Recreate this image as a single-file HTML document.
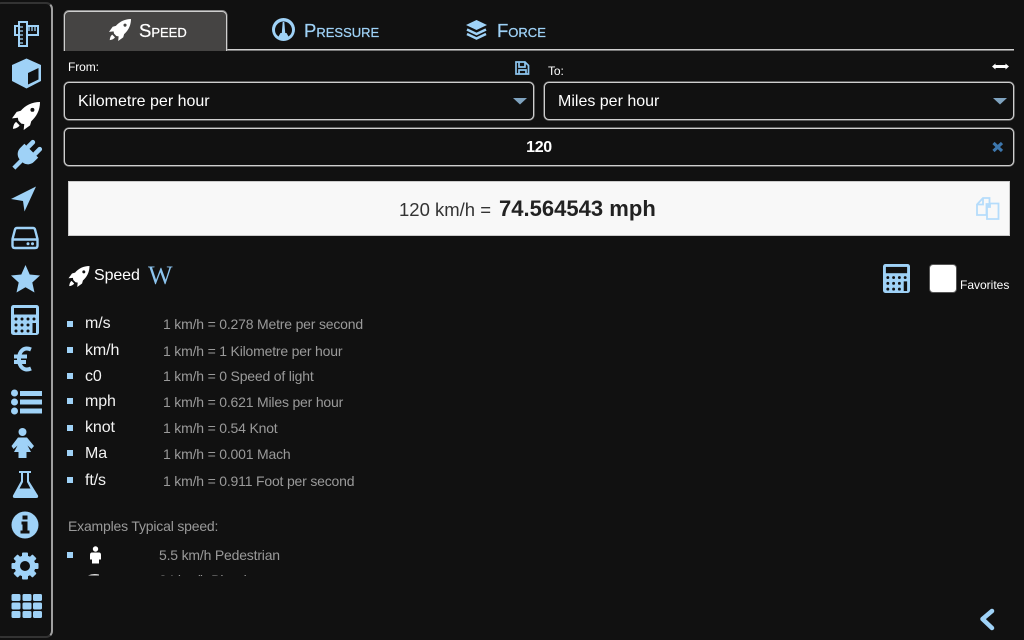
<!DOCTYPE html>
<html><head><meta charset="utf-8"><title>Speed</title>
<style>
html,body{margin:0;padding:0;width:1024px;height:640px;overflow:hidden;background:#111;font-family:"Liberation Sans",sans-serif;color:#fff}
.a{position:absolute;white-space:nowrap;line-height:1}
.box{position:absolute;box-sizing:border-box;border:1px solid #cfcfcf;border-radius:5px;background:#111;box-shadow:0 0 0 .6px #8a8a8a}
.tab{font-variant:small-caps;font-size:18.5px;line-height:1;-webkit-text-stroke:.25px currentColor}
.u{font-size:16px;color:#f2f2f2;letter-spacing:-.1px}
.v{font-size:14px;color:#9a9a9a;letter-spacing:-.19px}
.b{position:absolute;left:67px;width:6px;height:6px;background:#9fd2f7}
svg{position:absolute;left:0;top:0}
</style></head><body>
<div style="position:absolute;box-sizing:border-box;left:-6px;top:2px;width:59px;height:636px;border:2px solid;border-color:#333 #a0a0a0 #333 #111;border-radius:7px"></div>

<div style="position:absolute;left:64px;top:49px;width:950px;height:2px;background:linear-gradient(#d0d0d0 50%,#777 50%)"></div>
<div style="position:absolute;box-sizing:border-box;left:64px;top:11px;width:163px;height:40px;background:#454443;border:1px solid #cfcfcf;border-bottom:none;border-radius:5px 5px 0 0;box-shadow:0 -.5px 0 .5px #888"></div>

<div class="a tab" style="left:139px;top:22px;color:#fff">Speed</div>
<div class="a tab" style="left:304px;top:22px;color:#9fd2f7">Pressure</div>
<div class="a tab" style="left:497px;top:22px;color:#9fd2f7">Force</div>

<div class="a" style="left:68px;top:61px;font-size:12px;letter-spacing:-.1px">From:</div>
<div class="a" style="left:548px;top:65px;font-size:12px;letter-spacing:-.1px">To:</div>

<div class="box" style="left:64px;top:82px;width:470px;height:38px"></div>
<div class="box" style="left:544px;top:82px;width:470px;height:38px"></div>
<div class="a" style="left:78px;top:94px;font-size:16px">Kilometre per hour</div>
<div class="a" style="left:558px;top:94px;font-size:16px">Miles per hour</div>

<div class="box" style="left:64px;top:128px;width:950px;height:38px"></div>
<div class="a" style="left:64px;width:950px;top:140px;font-size:16px;font-weight:bold;text-align:center;letter-spacing:-.3px">120</div>

<div style="position:absolute;box-sizing:border-box;left:68px;top:181px;width:942px;height:55px;background:#f8f8f8;border:1px solid #ccc"></div>
<div class="a" style="left:399px;top:201px;font-size:18.5px;color:#333">120 km/h = </div>
<div class="a" style="left:499px;top:198px;font-size:22px;font-weight:bold;color:#222;letter-spacing:.02px">74.564543 mph</div>

<div class="a" style="left:94px;top:268px;font-size:16px;letter-spacing:-.1px">Speed</div>
<div class="a" style="left:148px;top:263px;font-size:26px;font-family:'Liberation Serif',serif;color:#8cc4ee">W</div>

<div style="position:absolute;box-sizing:border-box;left:929px;top:264px;width:28px;height:29px;background:#fff;border:1px solid #555;border-radius:4px"></div>
<div class="a" style="left:960px;top:279px;font-size:12px">Favorites</div>

<div class="b" style="top:321px"></div><div class="a u" style="left:85px;top:316px">m/s</div><div class="a v" style="left:163px;top:317px">1 km/h = 0.278 Metre per second</div>
<div class="b" style="top:347px"></div><div class="a u" style="left:85px;top:343px">km/h</div><div class="a v" style="left:163px;top:344px">1 km/h = 1 Kilometre per hour</div>
<div class="b" style="top:373px"></div><div class="a u" style="left:85px;top:369px">c0</div><div class="a v" style="left:163px;top:369px">1 km/h = 0 Speed of light</div>
<div class="b" style="top:398px"></div><div class="a u" style="left:85px;top:394px">mph</div><div class="a v" style="left:163px;top:395px">1 km/h = 0.621 Miles per hour</div>
<div class="b" style="top:425px"></div><div class="a u" style="left:85px;top:420px">knot</div><div class="a v" style="left:163px;top:421px">1 km/h = 0.54 Knot</div>
<div class="b" style="top:450px"></div><div class="a u" style="left:85px;top:446px">Ma</div><div class="a v" style="left:163px;top:447px">1 km/h = 0.001 Mach</div>
<div class="b" style="top:477px"></div><div class="a u" style="left:85px;top:473px">ft/s</div><div class="a v" style="left:163px;top:474px">1 km/h = 0.911 Foot per second</div>

<div class="a v" style="left:68px;top:519px">Examples Typical speed:</div>
<div class="b" style="top:552px"></div>
<div class="a v" style="left:159px;top:548px">5.5 km/h Pedestrian</div>
<div style="position:absolute;left:60px;top:570px;width:400px;height:6px;overflow:hidden"><div class="a v" style="left:99px;top:3px">24 km/h Bicycle</div></div>

<svg width="1024" height="640" viewBox="0 0 1024 640">
<defs>
<symbol id="rocket" viewBox="0 0 24 24"><path fill-rule="evenodd" d="M24 0C17 0 11.500 3 7.500 7.500L4 8.500 0 14 5 13.500 5.500 16 8 18.500 10.500 19 10 24 15.500 20 16.500 16.500C21 12.500 24 7 24 0ZM17.500 5A1.700 1.700 0 1 1 17.500 8.400 1.700 1.700 0 0 1 17.500 5Z"/><path d="M3.500 17C2 18 1 20 .8 23 3.500 22.700 5.500 21.700 6.500 20Z"/></symbol>
<symbol id="calc" viewBox="0 0 28 30"><rect width="28" height="30" rx="2.500" fill="#9fd2f7"/><rect x="3" y="3" width="22" height="6.500" fill="#111"/><g fill="#111"><circle cx="5" cy="14" r="1.500"/><circle cx="11" cy="14" r="1.500"/><circle cx="17" cy="14" r="1.500"/><circle cx="23" cy="14" r="1.500"/><circle cx="5" cy="20" r="1.500"/><circle cx="11" cy="20" r="1.500"/><circle cx="17" cy="20" r="1.500"/><circle cx="5" cy="26" r="1.500"/><circle cx="11" cy="26" r="1.500"/><circle cx="17" cy="26" r="1.500"/><rect x="21.500" y="18" width="3.500" height="10"/></g></symbol>
</defs>

<!-- ruler -->
<g fill="#111" stroke="#9fd2f7" stroke-width="2">
<rect x="15" y="26" width="23" height="9"/>
<path d="M29 27V31M32 27V31M35 27V31" stroke-width="1.300" fill="none"/>
<rect x="19" y="22" width="8" height="24"/>
<path d="M20 27H23M20 31H23M20 35H23M20 39H23M20 43H23" stroke-width="1.300" fill="none"/>
</g>
<!-- cube -->
<path fill="#9fd2f7" d="M26.500 58.500 41 65V81L26.500 88.500 12 81V65Z"/>
<path fill="#111" d="M28 73 38.500 68V79.500L28 84.500Z"/>
<!-- rocket -->
<use href="#rocket" x="12" y="102" width="28" height="28" fill="#fff"/>
<!-- plug -->
<g transform="translate(26.500,155.500) rotate(45) scale(.85)" fill="#9fd2f7">
<rect x="-8.500" y="-19" width="5.500" height="13" rx="2.700"/>
<rect x="3" y="-19" width="5.500" height="13" rx="2.700"/>
<path d="M-11.500-8H11.500V-1A10 10 0 0 1 2.500 9V21H-2.500V9A10 10 0 0 1-11.500-1Z"/>
</g>
<!-- nav -->
<path fill="#9fd2f7" d="M36 186.500 11 199 23 201 24.500 211.500Z"/>
<!-- drive -->
<path fill="none" stroke="#9fd2f7" stroke-width="2.400" d="M17 228H33Q34.500 228 35 229.500L37.500 239V245.500Q37.500 248 35 248H15Q12.500 248 12.500 245.500V239L15 229.500Q15.500 228 17 228ZM12.500 239.500H37.500"/>
<circle cx="28" cy="243.700" r="1.500" fill="#9fd2f7"/><circle cx="32.500" cy="243.700" r="1.500" fill="#9fd2f7"/>
<!-- star -->
<path fill="#9fd2f7" d="M25.500 265 29.700 274.500 40 275.500 32.300 282.500 34.500 292.500 25.500 287.300 16.500 292.500 18.700 282.500 11 275.500 21.300 274.500Z"/>
<!-- calculator -->
<use href="#calc" x="11" y="305" width="28" height="30"/>
<!-- euro -->
<path fill="none" stroke="#9fd2f7" stroke-width="4" d="M31 349.500C24 346.500 19 351 19 359S24 371.500 31 368.500M14 356.500H27M14 362H26"/>
<!-- list -->
<g fill="#9fd2f7"><circle cx="14.500" cy="393" r="3.500"/><circle cx="14.500" cy="402" r="3.500"/><circle cx="14.500" cy="411" r="3.500"/><rect x="20" y="391" width="22" height="5"/><rect x="20" y="399.500" width="22" height="5"/><rect x="20" y="408.500" width="22" height="5"/></g>
<!-- person -->
<g fill="#9fd2f7"><circle cx="22.500" cy="432" r="4"/><path d="M18 437.500H27L34 446 31.500 449 27.500 445.500 31 452H26.500V458H18.500V452H14L17.500 445.500 13.500 449 11.500 446Z"/></g>
<!-- flask -->
<path fill="#9fd2f7" d="M19 471H31V473H29V481L38 495.500Q38.800 498 36 498H15Q12.200 498 13 495.500L21 481V473H19Z"/>
<path fill="#111" d="M23 473H27V482L30.500 488.500H19.500L23 482Z"/>
<!-- info -->
<circle cx="25" cy="525" r="13.500" fill="#9fd2f7"/>
<path fill="#111" d="M22.500 515.500H27.500V519.500H22.500ZM21.500 521.500H27.500V530.500H29.500V533.500H20.500V530.500H22.500V524.500H21.500Z"/>
<!-- gear -->
<g fill="#9fd2f7"><circle cx="25" cy="566" r="10.500"/>
<rect x="22" y="552.500" width="6" height="27" rx="1"/><rect x="22" y="552.500" width="6" height="27" rx="1" transform="rotate(45 25 566)"/><rect x="22" y="552.500" width="6" height="27" rx="1" transform="rotate(90 25 566)"/><rect x="22" y="552.500" width="6" height="27" rx="1" transform="rotate(135 25 566)"/></g>
<circle cx="25" cy="566" r="5" fill="#111"/>
<!-- grid -->
<g fill="#9fd2f7"><rect x="11.500" y="594" width="9" height="7" rx="1.500"/><rect x="22.500" y="594" width="9" height="7" rx="1.500"/><rect x="33" y="594" width="9" height="7" rx="1.500"/><rect x="11.500" y="602.500" width="9" height="7" rx="1.500"/><rect x="22.500" y="602.500" width="9" height="7" rx="1.500"/><rect x="33" y="602.500" width="9" height="7" rx="1.500"/><rect x="11.500" y="611" width="9" height="7" rx="1.500"/><rect x="22.500" y="611" width="9" height="7" rx="1.500"/><rect x="33" y="611" width="9" height="7" rx="1.500"/></g>

<!-- tab icons -->
<use href="#rocket" x="109" y="19" width="22" height="22" fill="#fff"/>
<circle cx="283.500" cy="29.500" r="11.500" fill="#9fd2f7"/>
<path fill="#111" d="M275 30A8.500 8.500 0 1 1 292 30C292 33 290.500 35 288.500 36.500L286.500 33H280.500L278.500 36.500C276.500 35 275 33 275 30Z"/>
<path fill="#9fd2f7" d="M282.700 22H284.300L285.300 34H281.700Z"/>
<path fill="#9fd2f7" d="M476.500 20 487 25 476.500 30 466 25Z"/>
<path fill="none" stroke="#9fd2f7" stroke-width="2.500" d="M467 29.500 476.500 34 486 29.500M467 34 476.500 38.500 486 34"/>

<!-- save -->
<path fill="none" stroke="#8cc4ee" stroke-width="1.700" d="M516 62H525L528.500 65.500V74H516ZM519 62V67H525V62M519 74V70H526V74"/>
<!-- swap -->
<path fill="#fff" d="M992 66.500 995.500 63.500V65H1005.500V63.500L1009 66.500 1005.500 69.500V68H995.500V69.500Z"/>
<!-- select arrows -->
<path fill="#7fa3bf" d="M513 98H527L520 104.500Z"/>
<path fill="#7fa3bf" d="M993 98H1007L1000 104.500Z"/>
<!-- clear -->
<path fill="none" stroke="#3d77ad" stroke-width="3.200" d="M993.500 143 1002 151M1002 143 993.500 151"/>
<!-- copy -->
<g fill="none" stroke="#b5dcfb" stroke-width="1.800"><path d="M983 198H989.500V204H986.500V215H977V204.500Z"/><path d="M990 203.500H998.500V219H987V207Z"/><path d="M983 198V204.500H977M990 203.500V207H987"/></g>
<!-- calculator top right -->
<use href="#calc" x="883" y="264" width="27" height="29"/>
<!-- heading rocket -->
<use href="#rocket" x="68" y="266" width="22" height="21" fill="#fff"/>
<!-- person small -->
<g fill="#fff"><circle cx="95.500" cy="549" r="2.700"/><path d="M92 552.500H99Q101 552.500 101 555V559.500H99V563.500H92V559.500H90V555Q90 552.500 92 552.500Z"/></g>
<path d="M88 575.500Q93 573 99 574.500V575.500Z" fill="#ddd"/>
<!-- back chevron -->
<path fill="none" stroke="#9fd2f7" stroke-width="4.500" stroke-linecap="round" stroke-linejoin="round" d="M992 611 982.500 619 992 628"/>
</svg>
</body></html>
